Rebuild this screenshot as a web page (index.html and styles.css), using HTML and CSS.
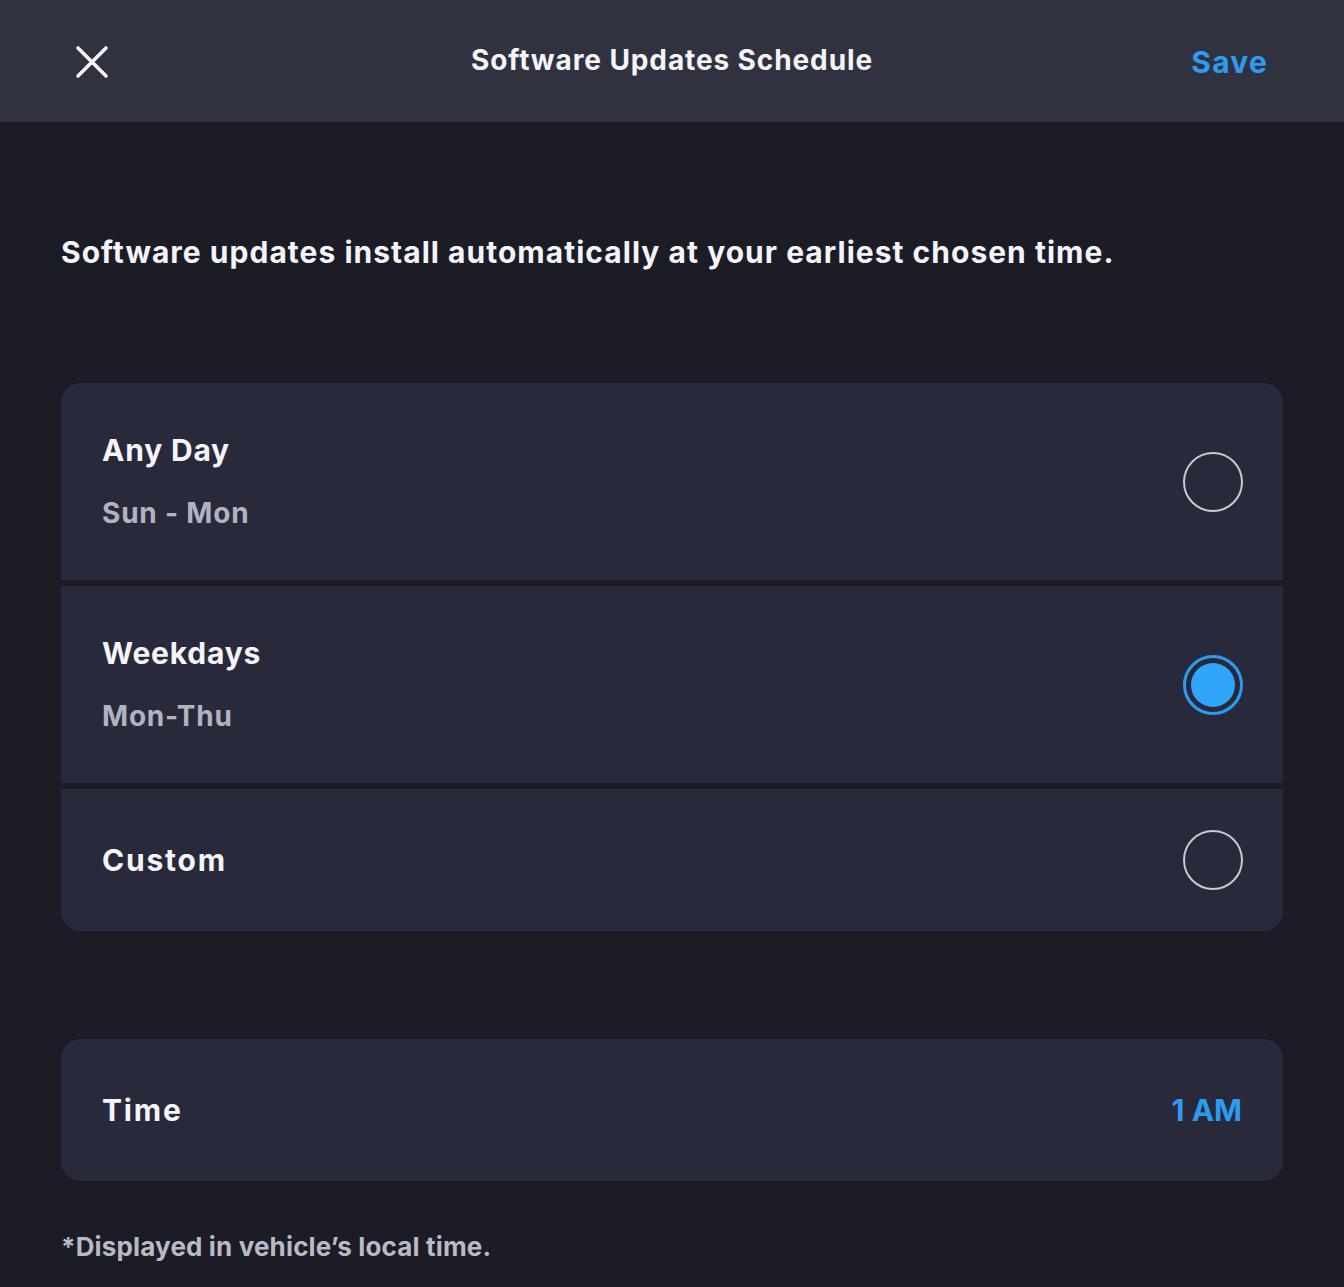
FILE: index.html
```html
<!DOCTYPE html>
<html lang="en">
<head>
<meta charset="utf-8">
<title>Software Updates Schedule</title>
<link rel="stylesheet" href="styles.css">
</head>
<body>
<header class="topbar">
  <button class="close" aria-label="Close">
    <svg width="34" height="34" viewBox="0 0 34 34"><path d="M3 3 L31 31 M31 3 L3 31" stroke="#f4f4fa" stroke-width="3.6" stroke-linecap="round"/></svg>
  </button>
  <h1 class="title">Software Updates Schedule</h1>
  <button class="save">Save</button>
</header>
<main class="content">
  <p class="intro">Software updates install automatically at your earliest chosen time.</p>
  <section class="group">
    <div class="row row-tall">
      <div class="labels">
        <div class="label">Any Day</div>
        <div class="sub">Sun - Mon</div>
      </div>
      <span class="radio"></span>
    </div>
    <div class="row row-tall">
      <div class="labels">
        <div class="label">Weekdays</div>
        <div class="sub">Mon-Thu</div>
      </div>
      <span class="radio checked"><span class="dot"></span></span>
    </div>
    <div class="row row-short">
      <div class="labels">
        <div class="label label-wide">Custom</div>
      </div>
      <span class="radio"></span>
    </div>
  </section>
  <section class="time-card">
    <div class="label label-wide">Time</div>
    <div class="time-value">1 AM</div>
  </section>
  <p class="note">*Displayed in vehicle’s local time.</p>
</main>
</body>
</html>
```
FILE: styles.css
```css
html, body {
  margin: 0;
  padding: 0;
}
body {
  background: #1b1c26;
  font-family: "Inter", "Open Sans", "Liberation Sans", sans-serif;
  font-weight: 700;
  color: #f2f2f8;
  width: 1344px;
  height: 1287px;
  overflow: hidden;
}
.topbar {
  height: 122px;
  background: #303240;
  display: flex;
  align-items: center;
  justify-content: space-between;
  padding: 0 76px 0 75px;
  box-sizing: border-box;
  position: relative;
}
.close {
  background: none;
  border: 0;
  padding: 0;
  width: 34px;
  height: 34px;
  display: flex;
  margin-top: 2px;
}
.title {
  position: absolute;
  left: 0;
  right: 0;
  top: 0;
  height: 122px;
  line-height: 120px;
  margin: 0;
  text-align: center;
  font-size: 28px;
  font-weight: 700;
  letter-spacing: 0.9px;
  color: #f4f4fa;
  pointer-events: none;
}
.save {
  background: none;
  border: 0;
  padding: 0;
  font-family: inherit;
  font-weight: 700;
  font-size: 30px;
  letter-spacing: 1.2px;
  color: #2d9bf0;
  margin-top: 2px;
  position: relative;
  z-index: 1;
}
.content {
  padding: 0 61px;
}
.intro {
  margin: 0;
  padding-top: 108px;
  height: 44px;
  line-height: 44px;
  font-size: 30px;
  letter-spacing: 1.02px;
  color: #f4f4fa;
  white-space: nowrap;
}
.group {
  margin-top: 109px;
  display: flex;
  flex-direction: column;
  gap: 6px;
  border-radius: 20px;
  overflow: hidden;
}
.row {
  background: #282a3b;
  display: flex;
  align-items: center;
  justify-content: space-between;
  padding: 0 40px 0 41px;
}
.row-tall {
  height: 197px;
}
.row-short {
  height: 142px;
}
.labels {
  display: flex;
  flex-direction: column;
  gap: 27px;
}
.label {
  font-size: 30px;
  line-height: 36px;
  letter-spacing: 0.8px;
  color: #f4f4fa;
}
.label-wide {
  letter-spacing: 1.8px;
}
.sub {
  font-size: 28px;
  line-height: 36px;
  letter-spacing: 0.8px;
  color: #b2b3c0;
}
.radio {
  width: 56px;
  height: 56px;
  border-radius: 50%;
  border: 2px solid #c9c9d2;
  display: flex;
  align-items: center;
  justify-content: center;
  box-sizing: content-box;
}
.radio.checked {
  border: 3px solid #2d9bf0;
  width: 54px;
  height: 54px;
}
.dot {
  width: 44px;
  height: 44px;
  border-radius: 50%;
  background: #2fa6f7;
}
.time-card {
  margin-top: 108px;
  height: 142px;
  background: #282a3b;
  border-radius: 20px;
  display: flex;
  align-items: center;
  justify-content: space-between;
  padding: 0 41px;
}
.time-value {
  font-size: 30px;
  line-height: 36px;
  color: #2d9bf0;
}
.note {
  margin: 46px 0 0;
  font-size: 26px;
  line-height: 40px;
  color: #b9bac6;
  letter-spacing: 0.15px;
}
```
